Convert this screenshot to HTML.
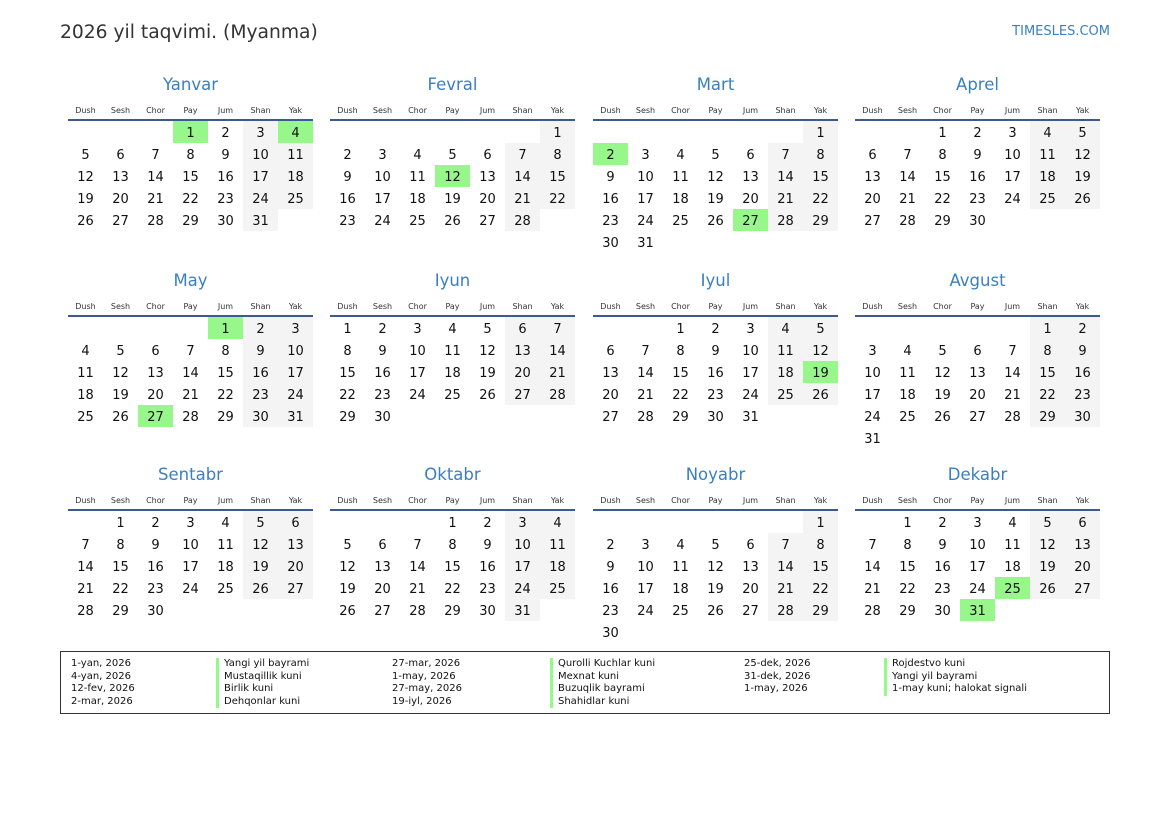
<!DOCTYPE html>
<html><head><meta charset="utf-8"><style>
*{margin:0;padding:0;box-sizing:border-box}
body{width:1169px;height:827px;background:#fff;font-family:"DejaVu Sans","Liberation Sans",sans-serif;color:#111;position:relative;overflow:hidden}
.h1{position:absolute;left:60px;top:20px;font-size:18.7px;color:#333;line-height:26px}
.logo{position:absolute;right:59px;top:23px;font-size:13px;color:#3a7fc1;line-height:18px}
.m{position:absolute;width:245px;height:200px}
.t{position:absolute;top:0;left:0;width:245px;text-align:center;font-size:16.5px;line-height:20px;color:#3a7fc1}
.d{position:absolute;top:31px;left:0;display:flex;width:245px}
.d span{width:35px;text-align:center;font-size:8px;line-height:10px;color:#333}
.ln{position:absolute;top:44px;left:0;width:245px;height:2px;background:#3d5a8f}
table{position:absolute;top:46px;left:0;border-collapse:collapse;table-layout:fixed;width:245px}
td{width:35px;height:22px;padding:3px 0 0;text-align:center;font-size:13px;line-height:19px;vertical-align:top}
td:nth-child(n+6):not(:empty){background:#f4f4f4}
td.h,td.h:nth-child(n+6){background:#98f78a}
.lg{position:absolute;left:60px;top:651px;width:1050px;height:63px;border:1.5px solid #333}
.c{position:absolute;top:6px;font-size:10px;line-height:12.6px;color:#111;white-space:nowrap}
.b{border-left:3px solid #98f78a;padding-left:5px}
</style></head><body>
<div class="h1">2026 yil taqvimi. (Myanma)</div>
<div class="logo">TIMESLES.COM</div>

<div class="m" style="left:68px;top:75px"><div class="t">Yanvar</div><div class="d"><span>Dush</span><span>Sesh</span><span>Chor</span><span>Pay</span><span>Jum</span><span>Shan</span><span>Yak</span></div><div class="ln"></div>
<table><tr><td></td><td></td><td></td><td class="h">1</td><td>2</td><td>3</td><td class="h">4</td></tr>
<tr><td>5</td><td>6</td><td>7</td><td>8</td><td>9</td><td>10</td><td>11</td></tr>
<tr><td>12</td><td>13</td><td>14</td><td>15</td><td>16</td><td>17</td><td>18</td></tr>
<tr><td>19</td><td>20</td><td>21</td><td>22</td><td>23</td><td>24</td><td>25</td></tr>
<tr><td>26</td><td>27</td><td>28</td><td>29</td><td>30</td><td>31</td><td></td></tr></table></div>

<div class="m" style="left:330px;top:75px"><div class="t">Fevral</div><div class="d"><span>Dush</span><span>Sesh</span><span>Chor</span><span>Pay</span><span>Jum</span><span>Shan</span><span>Yak</span></div><div class="ln"></div>
<table><tr><td></td><td></td><td></td><td></td><td></td><td></td><td>1</td></tr>
<tr><td>2</td><td>3</td><td>4</td><td>5</td><td>6</td><td>7</td><td>8</td></tr>
<tr><td>9</td><td>10</td><td>11</td><td class="h">12</td><td>13</td><td>14</td><td>15</td></tr>
<tr><td>16</td><td>17</td><td>18</td><td>19</td><td>20</td><td>21</td><td>22</td></tr>
<tr><td>23</td><td>24</td><td>25</td><td>26</td><td>27</td><td>28</td><td></td></tr></table></div>

<div class="m" style="left:593px;top:75px"><div class="t">Mart</div><div class="d"><span>Dush</span><span>Sesh</span><span>Chor</span><span>Pay</span><span>Jum</span><span>Shan</span><span>Yak</span></div><div class="ln"></div>
<table><tr><td></td><td></td><td></td><td></td><td></td><td></td><td>1</td></tr>
<tr><td class="h">2</td><td>3</td><td>4</td><td>5</td><td>6</td><td>7</td><td>8</td></tr>
<tr><td>9</td><td>10</td><td>11</td><td>12</td><td>13</td><td>14</td><td>15</td></tr>
<tr><td>16</td><td>17</td><td>18</td><td>19</td><td>20</td><td>21</td><td>22</td></tr>
<tr><td>23</td><td>24</td><td>25</td><td>26</td><td class="h">27</td><td>28</td><td>29</td></tr>
<tr><td>30</td><td>31</td><td></td><td></td><td></td><td></td><td></td></tr></table></div>

<div class="m" style="left:855px;top:75px"><div class="t">Aprel</div><div class="d"><span>Dush</span><span>Sesh</span><span>Chor</span><span>Pay</span><span>Jum</span><span>Shan</span><span>Yak</span></div><div class="ln"></div>
<table><tr><td></td><td></td><td>1</td><td>2</td><td>3</td><td>4</td><td>5</td></tr>
<tr><td>6</td><td>7</td><td>8</td><td>9</td><td>10</td><td>11</td><td>12</td></tr>
<tr><td>13</td><td>14</td><td>15</td><td>16</td><td>17</td><td>18</td><td>19</td></tr>
<tr><td>20</td><td>21</td><td>22</td><td>23</td><td>24</td><td>25</td><td>26</td></tr>
<tr><td>27</td><td>28</td><td>29</td><td>30</td><td></td><td></td><td></td></tr></table></div>

<div class="m" style="left:68px;top:271px"><div class="t">May</div><div class="d"><span>Dush</span><span>Sesh</span><span>Chor</span><span>Pay</span><span>Jum</span><span>Shan</span><span>Yak</span></div><div class="ln"></div>
<table><tr><td></td><td></td><td></td><td></td><td class="h">1</td><td>2</td><td>3</td></tr>
<tr><td>4</td><td>5</td><td>6</td><td>7</td><td>8</td><td>9</td><td>10</td></tr>
<tr><td>11</td><td>12</td><td>13</td><td>14</td><td>15</td><td>16</td><td>17</td></tr>
<tr><td>18</td><td>19</td><td>20</td><td>21</td><td>22</td><td>23</td><td>24</td></tr>
<tr><td>25</td><td>26</td><td class="h">27</td><td>28</td><td>29</td><td>30</td><td>31</td></tr></table></div>

<div class="m" style="left:330px;top:271px"><div class="t">Iyun</div><div class="d"><span>Dush</span><span>Sesh</span><span>Chor</span><span>Pay</span><span>Jum</span><span>Shan</span><span>Yak</span></div><div class="ln"></div>
<table><tr><td>1</td><td>2</td><td>3</td><td>4</td><td>5</td><td>6</td><td>7</td></tr>
<tr><td>8</td><td>9</td><td>10</td><td>11</td><td>12</td><td>13</td><td>14</td></tr>
<tr><td>15</td><td>16</td><td>17</td><td>18</td><td>19</td><td>20</td><td>21</td></tr>
<tr><td>22</td><td>23</td><td>24</td><td>25</td><td>26</td><td>27</td><td>28</td></tr>
<tr><td>29</td><td>30</td><td></td><td></td><td></td><td></td><td></td></tr></table></div>

<div class="m" style="left:593px;top:271px"><div class="t">Iyul</div><div class="d"><span>Dush</span><span>Sesh</span><span>Chor</span><span>Pay</span><span>Jum</span><span>Shan</span><span>Yak</span></div><div class="ln"></div>
<table><tr><td></td><td></td><td>1</td><td>2</td><td>3</td><td>4</td><td>5</td></tr>
<tr><td>6</td><td>7</td><td>8</td><td>9</td><td>10</td><td>11</td><td>12</td></tr>
<tr><td>13</td><td>14</td><td>15</td><td>16</td><td>17</td><td>18</td><td class="h">19</td></tr>
<tr><td>20</td><td>21</td><td>22</td><td>23</td><td>24</td><td>25</td><td>26</td></tr>
<tr><td>27</td><td>28</td><td>29</td><td>30</td><td>31</td><td></td><td></td></tr></table></div>

<div class="m" style="left:855px;top:271px"><div class="t">Avgust</div><div class="d"><span>Dush</span><span>Sesh</span><span>Chor</span><span>Pay</span><span>Jum</span><span>Shan</span><span>Yak</span></div><div class="ln"></div>
<table><tr><td></td><td></td><td></td><td></td><td></td><td>1</td><td>2</td></tr>
<tr><td>3</td><td>4</td><td>5</td><td>6</td><td>7</td><td>8</td><td>9</td></tr>
<tr><td>10</td><td>11</td><td>12</td><td>13</td><td>14</td><td>15</td><td>16</td></tr>
<tr><td>17</td><td>18</td><td>19</td><td>20</td><td>21</td><td>22</td><td>23</td></tr>
<tr><td>24</td><td>25</td><td>26</td><td>27</td><td>28</td><td>29</td><td>30</td></tr>
<tr><td>31</td><td></td><td></td><td></td><td></td><td></td><td></td></tr></table></div>

<div class="m" style="left:68px;top:465px"><div class="t">Sentabr</div><div class="d"><span>Dush</span><span>Sesh</span><span>Chor</span><span>Pay</span><span>Jum</span><span>Shan</span><span>Yak</span></div><div class="ln"></div>
<table><tr><td></td><td>1</td><td>2</td><td>3</td><td>4</td><td>5</td><td>6</td></tr>
<tr><td>7</td><td>8</td><td>9</td><td>10</td><td>11</td><td>12</td><td>13</td></tr>
<tr><td>14</td><td>15</td><td>16</td><td>17</td><td>18</td><td>19</td><td>20</td></tr>
<tr><td>21</td><td>22</td><td>23</td><td>24</td><td>25</td><td>26</td><td>27</td></tr>
<tr><td>28</td><td>29</td><td>30</td><td></td><td></td><td></td><td></td></tr></table></div>

<div class="m" style="left:330px;top:465px"><div class="t">Oktabr</div><div class="d"><span>Dush</span><span>Sesh</span><span>Chor</span><span>Pay</span><span>Jum</span><span>Shan</span><span>Yak</span></div><div class="ln"></div>
<table><tr><td></td><td></td><td></td><td>1</td><td>2</td><td>3</td><td>4</td></tr>
<tr><td>5</td><td>6</td><td>7</td><td>8</td><td>9</td><td>10</td><td>11</td></tr>
<tr><td>12</td><td>13</td><td>14</td><td>15</td><td>16</td><td>17</td><td>18</td></tr>
<tr><td>19</td><td>20</td><td>21</td><td>22</td><td>23</td><td>24</td><td>25</td></tr>
<tr><td>26</td><td>27</td><td>28</td><td>29</td><td>30</td><td>31</td><td></td></tr></table></div>

<div class="m" style="left:593px;top:465px"><div class="t">Noyabr</div><div class="d"><span>Dush</span><span>Sesh</span><span>Chor</span><span>Pay</span><span>Jum</span><span>Shan</span><span>Yak</span></div><div class="ln"></div>
<table><tr><td></td><td></td><td></td><td></td><td></td><td></td><td>1</td></tr>
<tr><td>2</td><td>3</td><td>4</td><td>5</td><td>6</td><td>7</td><td>8</td></tr>
<tr><td>9</td><td>10</td><td>11</td><td>12</td><td>13</td><td>14</td><td>15</td></tr>
<tr><td>16</td><td>17</td><td>18</td><td>19</td><td>20</td><td>21</td><td>22</td></tr>
<tr><td>23</td><td>24</td><td>25</td><td>26</td><td>27</td><td>28</td><td>29</td></tr>
<tr><td>30</td><td></td><td></td><td></td><td></td><td></td><td></td></tr></table></div>

<div class="m" style="left:855px;top:465px"><div class="t">Dekabr</div><div class="d"><span>Dush</span><span>Sesh</span><span>Chor</span><span>Pay</span><span>Jum</span><span>Shan</span><span>Yak</span></div><div class="ln"></div>
<table><tr><td></td><td>1</td><td>2</td><td>3</td><td>4</td><td>5</td><td>6</td></tr>
<tr><td>7</td><td>8</td><td>9</td><td>10</td><td>11</td><td>12</td><td>13</td></tr>
<tr><td>14</td><td>15</td><td>16</td><td>17</td><td>18</td><td>19</td><td>20</td></tr>
<tr><td>21</td><td>22</td><td>23</td><td>24</td><td class="h">25</td><td>26</td><td>27</td></tr>
<tr><td>28</td><td>29</td><td>30</td><td class="h">31</td><td></td><td></td><td></td></tr></table></div>

<div class="lg">
<div class="c" style="left:10px">1-yan, 2026<br>4-yan, 2026<br>12-fev, 2026<br>2-mar, 2026</div>
<div class="c b" style="left:155px">Yangi yil bayrami<br>Mustaqillik kuni<br>Birlik kuni<br>Dehqonlar kuni</div>
<div class="c" style="left:331px">27-mar, 2026<br>1-may, 2026<br>27-may, 2026<br>19-iyl, 2026</div>
<div class="c b" style="left:489px">Qurolli Kuchlar kuni<br>Mexnat kuni<br>Buzuqlik bayrami<br>Shahidlar kuni</div>
<div class="c" style="left:683px">25-dek, 2026<br>31-dek, 2026<br>1-may, 2026</div>
<div class="c b" style="left:823px">Rojdestvo kuni<br>Yangi yil bayrami<br>1-may kuni; halokat signali</div>
</div>
</body></html>
